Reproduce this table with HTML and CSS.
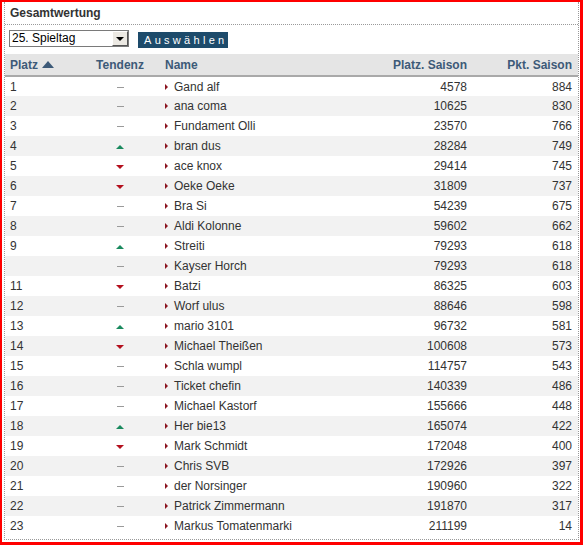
FILE: index.html
```html
<!DOCTYPE html>
<html>
<head>
<meta charset="utf-8">
<link rel="stylesheet" href="styles.css">
</head>
<body>
<div class="frame">
  <div class="box">
    <div class="title">Gesamtwertung</div>
    <div class="controls">
      <div class="select"><span class="sel-text">25. Spieltag</span><span class="sel-btn"><span class="sel-tri"></span></span></div>
      <div class="btn">Auswählen</div>
    </div>
    <table class="tbl">
      <colgroup><col class="c1"><col class="c2"><col class="c3"><col class="c4"><col class="c5"></colgroup>
      <thead>
        <tr><th class="l">Platz <span class="sort"></span></th><th class="c">Tendenz</th><th class="l n">Name</th><th class="r">Platz. Saison</th><th class="r last">Pkt. Saison</th></tr>
      </thead>
      <tbody>
        <tr><td>1</td><td class="c"><span class="dash"></span></td><td class="n"><span class="mk"></span>Gand alf</td><td class="r">4578</td><td class="r last">884</td></tr>
        <tr><td>2</td><td class="c"><span class="dash"></span></td><td class="n"><span class="mk"></span>ana coma</td><td class="r">10625</td><td class="r last">830</td></tr>
        <tr><td>3</td><td class="c"><span class="dash"></span></td><td class="n"><span class="mk"></span>Fundament Olli</td><td class="r">23570</td><td class="r last">766</td></tr>
        <tr><td>4</td><td class="c"><span class="up"></span></td><td class="n"><span class="mk"></span>bran dus</td><td class="r">28284</td><td class="r last">749</td></tr>
        <tr><td>5</td><td class="c"><span class="down"></span></td><td class="n"><span class="mk"></span>ace knox</td><td class="r">29414</td><td class="r last">745</td></tr>
        <tr><td>6</td><td class="c"><span class="down"></span></td><td class="n"><span class="mk"></span>Oeke Oeke</td><td class="r">31809</td><td class="r last">737</td></tr>
        <tr><td>7</td><td class="c"><span class="dash"></span></td><td class="n"><span class="mk"></span>Bra Si</td><td class="r">54239</td><td class="r last">675</td></tr>
        <tr><td>8</td><td class="c"><span class="dash"></span></td><td class="n"><span class="mk"></span>Aldi Kolonne</td><td class="r">59602</td><td class="r last">662</td></tr>
        <tr><td>9</td><td class="c"><span class="up"></span></td><td class="n"><span class="mk"></span>Streiti</td><td class="r">79293</td><td class="r last">618</td></tr>
        <tr><td></td><td class="c"><span class="dash"></span></td><td class="n"><span class="mk"></span>Kayser Horch</td><td class="r">79293</td><td class="r last">618</td></tr>
        <tr><td>11</td><td class="c"><span class="down"></span></td><td class="n"><span class="mk"></span>Batzi</td><td class="r">86325</td><td class="r last">603</td></tr>
        <tr><td>12</td><td class="c"><span class="dash"></span></td><td class="n"><span class="mk"></span>Worf ulus</td><td class="r">88646</td><td class="r last">598</td></tr>
        <tr><td>13</td><td class="c"><span class="up"></span></td><td class="n"><span class="mk"></span>mario 3101</td><td class="r">96732</td><td class="r last">581</td></tr>
        <tr><td>14</td><td class="c"><span class="down"></span></td><td class="n"><span class="mk"></span>Michael Theißen</td><td class="r">100608</td><td class="r last">573</td></tr>
        <tr><td>15</td><td class="c"><span class="dash"></span></td><td class="n"><span class="mk"></span>Schla wumpl</td><td class="r">114757</td><td class="r last">543</td></tr>
        <tr><td>16</td><td class="c"><span class="dash"></span></td><td class="n"><span class="mk"></span>Ticket chefin</td><td class="r">140339</td><td class="r last">486</td></tr>
        <tr><td>17</td><td class="c"><span class="dash"></span></td><td class="n"><span class="mk"></span>Michael Kastorf</td><td class="r">155666</td><td class="r last">448</td></tr>
        <tr><td>18</td><td class="c"><span class="up"></span></td><td class="n"><span class="mk"></span>Her bie13</td><td class="r">165074</td><td class="r last">422</td></tr>
        <tr><td>19</td><td class="c"><span class="down"></span></td><td class="n"><span class="mk"></span>Mark Schmidt</td><td class="r">172048</td><td class="r last">400</td></tr>
        <tr><td>20</td><td class="c"><span class="dash"></span></td><td class="n"><span class="mk"></span>Chris SVB</td><td class="r">172926</td><td class="r last">397</td></tr>
        <tr><td>21</td><td class="c"><span class="dash"></span></td><td class="n"><span class="mk"></span>der Norsinger</td><td class="r">190960</td><td class="r last">322</td></tr>
        <tr><td>22</td><td class="c"><span class="dash"></span></td><td class="n"><span class="mk"></span>Patrick Zimmermann</td><td class="r">191870</td><td class="r last">317</td></tr>
        <tr><td>23</td><td class="c"><span class="dash"></span></td><td class="n"><span class="mk"></span>Markus Tomatenmarki</td><td class="r">211199</td><td class="r last">14</td></tr>
      </tbody>
    </table>
  </div>
</div>
</body>
</html>
```

FILE: styles.css
```css
* { box-sizing: border-box; }
html, body { margin: 0; padding: 0; background: #fff; }
body { font-family: "Liberation Sans", Arial, sans-serif; font-size: 12px; color: #333; }

.frame {
  width: 583px;
  height: 545px;
  border-top: 2px solid #f00;
  border-left: 2px solid #f00;
  border-right: 3px solid #f00;
  border-bottom: 3px solid #f00;
  padding: 0 1px 0 2px;
}
.box {
  height: 538px;
  border: 1px dotted #9a9a9a;
  border-top: none;
}
.title {
  height: 23px;
  padding: 4px 0 0 5px;
  font-weight: bold;
  font-size: 12px;
  color: #333;
  border-bottom: 1px dotted #9a9a9a;
}
.controls {
  display: flex;
  align-items: flex-start;
  gap: 9px;
  padding: 5px 0 0 4px;
  height: 29px;
}
.select {
  width: 120px;
  height: 17px;
  border: 1px solid #7a7a7a;
  display: flex;
  align-items: center;
  justify-content: space-between;
  background: #fff;
}
.sel-text { padding-left: 2px; font-size: 12px; color: #000; line-height: 15px; }
.sel-btn {
  width: 16px;
  height: 15px;
  background: #ece9e3;
  border-left: 1px solid #fff;
  border-top: 1px solid #fff;
  border-right: 1px solid #555;
  border-bottom: 1px solid #555;
  display: flex;
  align-items: center;
  justify-content: center;
}
.sel-tri {
  width: 0; height: 0;
  border-left: 4px solid transparent;
  border-right: 4px solid transparent;
  border-top: 4px solid #000;
}
.btn {
  margin-top: 2px;
  width: 90px;
  height: 16px;
  background: #1d4b6b;
  color: #fff;
  font-size: 11px;
  letter-spacing: 3.3px;
  line-height: 16px;
  padding-left: 6px;
}

.tbl {
  width: 573px;
  border-collapse: collapse;
  table-layout: fixed;
  margin-left: 0;
}
.c1 { width: 80px; }
.c2 { width: 70px; }
.c3 { width: 225px; }
.c4 { width: 92px; }
.c5 { width: 106px; }

.tbl th {
  height: 22px;
  background: #e5e5e5;
  border-bottom: 2px solid #a9a9a9;
  color: #3d5a78;
  font-weight: bold;
  font-size: 12px;
  padding: 0 5px;
  text-align: left;
  vertical-align: middle;
}
.tbl td {
  height: 20px;
  padding: 0 5px;
  font-size: 12px;
  color: #333;
  vertical-align: middle;
  white-space: nowrap;
}
.tbl tbody tr:nth-child(even) td { background: #f2f2f2; }
.tbl .c { text-align: center; }
.tbl .r { text-align: right; }
.tbl .last { padding-right: 6px; }
.tbl .n { padding-left: 10px; }
.tbl th.n { padding-left: 10px; }

.sort {
  display: inline-block;
  width: 0; height: 0;
  border-left: 6px solid transparent;
  border-right: 6px solid transparent;
  border-bottom: 7px solid #3d5a78;
  vertical-align: 1px;
  margin-left: 1px;
}
.dash {
  display: inline-block;
  width: 7px;
  height: 1px;
  background: #9a9a9a;
  vertical-align: middle;
}
.up {
  display: inline-block;
  width: 0; height: 0;
  border-left: 4px solid transparent;
  border-right: 4px solid transparent;
  border-bottom: 4px solid #1a8a5e;
  vertical-align: middle;
}
.down {
  display: inline-block;
  width: 0; height: 0;
  border-left: 4px solid transparent;
  border-right: 4px solid transparent;
  border-top: 4px solid #b4101e;
  vertical-align: middle;
}
.mk {
  display: inline-block;
  width: 0; height: 0;
  border-top: 3px solid transparent;
  border-bottom: 3px solid transparent;
  border-left: 3px solid #8b1520;
  margin-right: 6px;
  vertical-align: 1px;
}
```
